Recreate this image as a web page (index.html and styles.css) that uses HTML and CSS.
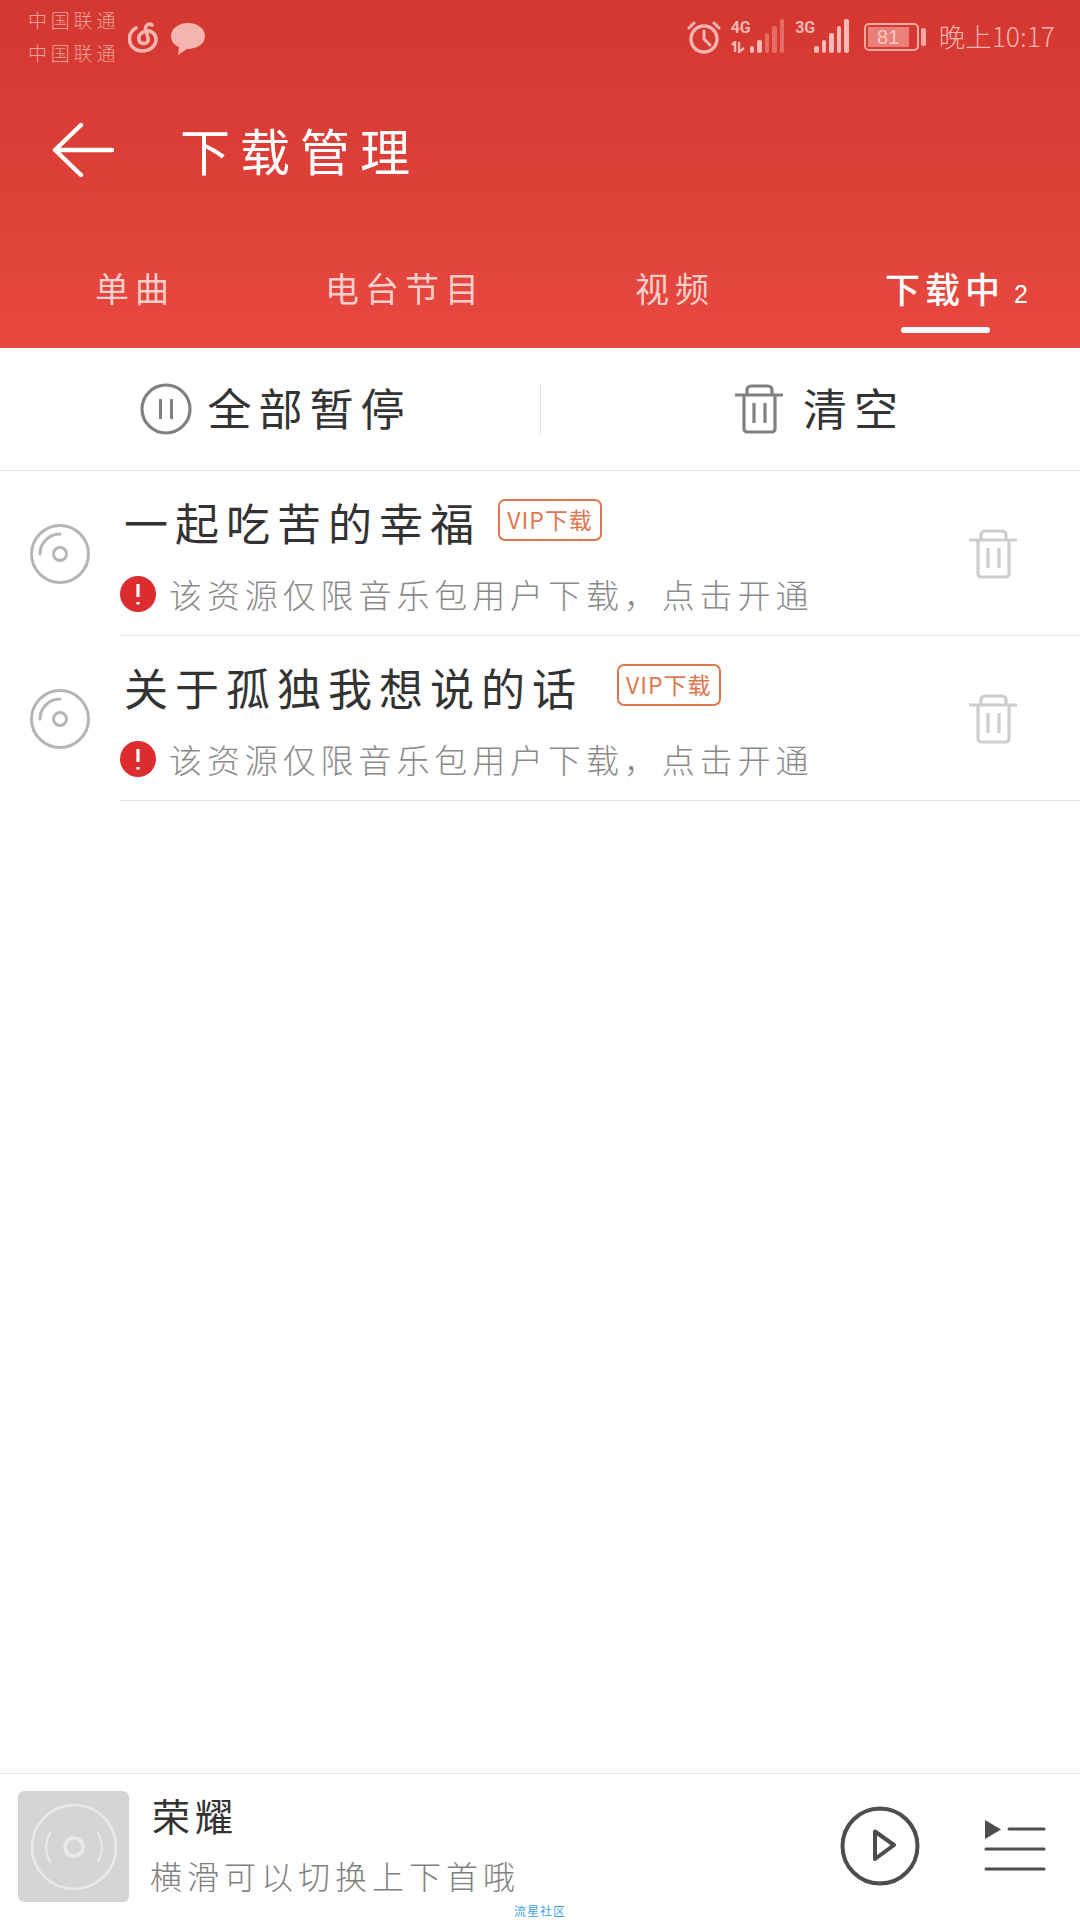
FILE: index.html
```html
<!DOCTYPE html>
<html lang="zh-CN">
<head>
<meta charset="UTF-8" />
<meta name="viewport" content="width=device-width, initial-scale=1.0" />
<title>下载管理</title>
<link rel="stylesheet" href="styles.css">
</head>
<body>

<svg class="defs" width="0" height="0">
  <symbol id="trash" viewBox="0 0 50 50">
    <path d="M1 11H49M10 11V45a3 3 0 0 0 3 3H38a3 3 0 0 0 3-3V11M13 11V6a4 4 0 0 1 4-4H34a4 4 0 0 1 4 4V11M20 19V39M31 19V39" fill="none" stroke="currentColor" stroke-width="3.200" />
  </symbol>
  <symbol id="disc" viewBox="0 0 60 60">
    <circle cx="30" cy="30" r="28.500" fill="none" stroke="#b5b5b5" stroke-width="3" />
    <circle cx="30" cy="30" r="6.500" fill="none" stroke="#b5b5b5" stroke-width="3" />
    <path d="M10 30A20 20 0 0 1 30 10" fill="none" stroke="#b5b5b5" stroke-width="3" stroke-linecap="round" />
  </symbol>
</svg>

<div class="page">
  <!-- Cabecera roja -->
  <header class="header">
    <div class="status">
      <div class="status-left">
        <div class="carriers">
          <span>中国联通</span>
          <span>中国联通</span>
        </div>
        <svg class="app-icon" width="30" height="32" viewBox="0 0 30 32">
          <path d="M8 6C3 9 1 13 1.500 18C2 25 8 29 14 29C22 29 28 24 28 17C28 12 23 8 18 9C13 10 10 14 11 18C12 22 18 23 20 19C21 16 18 11 17.500 7C17 3 21 1 24 3" fill="none" stroke="currentColor" stroke-width="3.600" stroke-linecap="round" />
        </svg>
        <svg class="app-icon" width="36" height="34" viewBox="0 0 36 34">
          <path d="M18 1C28 1 35 7 35 14C35 22 27 27 17 27L8 33L9 25C4 23 1 19 1 14C1 7 8 1 18 1Z" fill="currentColor" />
        </svg>
      </div>
      <div class="status-right">
        <svg class="alarm" width="34" height="34" viewBox="0 0 34 34">
          <circle cx="17" cy="19" r="13" fill="none" stroke="currentColor" stroke-width="3.400" />
          <path d="M17 11V19L23 25M2 8L7 3M32 8L27 3" fill="none" stroke="currentColor" stroke-width="3" stroke-linecap="round" />
        </svg>
        <div class="net">
          <div class="net-type">
            <span class="net-label">4G</span>
            <svg width="18" height="12" viewBox="0 0 18 12">
              <path d="M1 4L4 1V11M8 1V11L13 7" fill="none" stroke="currentColor" stroke-width="2.400" />
            </svg>
          </div>
          <div class="bars">
            <i class="bar b1"></i><i class="bar b2"></i><i class="bar b3 dim"></i><i class="bar b4 dim"></i><i class="bar b5 dim"></i>
          </div>
        </div>
        <div class="net">
          <div class="net-type">
            <span class="net-label">3G</span>
          </div>
          <div class="bars">
            <i class="bar b1"></i><i class="bar b2"></i><i class="bar b3"></i><i class="bar b4"></i><i class="bar b5"></i>
          </div>
        </div>
        <div class="battery">
          <div class="battery-body"><div class="battery-fill">81</div></div>
          <div class="battery-nub"></div>
        </div>
        <div class="clock">晚上10:17</div>
      </div>
    </div>

    <div class="toolbar">
      <svg class="back" width="62" height="56" viewBox="0 0 62 56">
        <path d="M29 3L3 28L29 53M3 28H60" fill="none" stroke="#fff" stroke-width="4.400" stroke-linecap="round" stroke-linejoin="round" />
      </svg>
      <h1 class="page-title">下载管理</h1>
    </div>

    <nav class="tabs">
      <div class="tab">单曲</div>
      <div class="tab">电台节目</div>
      <div class="tab">视频</div>
      <div class="tab tab-active">
        <span class="tab-label">下载中<span class="tab-count">2</span></span>
        <span class="tab-line"></span>
      </div>
    </nav>
  </header>

  <!-- Acciones -->
  <div class="actions">
    <div class="action action-pause">
      <svg width="52" height="52" viewBox="0 0 52 52">
        <circle cx="26" cy="26" r="24" fill="none" stroke="#808080" stroke-width="3.200" />
        <path d="M20.500 16V36M31.500 16V36" fill="none" stroke="#808080" stroke-width="3" />
      </svg>
      <span>全部暂停</span>
    </div>
    <div class="action action-clear">
      <svg class="icon-trash" width="50" height="50"><use href="#trash" /></svg>
      <span>清空</span>
    </div>
  </div>

  <!-- Lista de descargas -->
  <main class="list">
    <div class="song">
      <div class="song-disc"><svg width="60" height="60"><use href="#disc" /></svg></div>
      <div class="song-main">
        <div class="song-text">
          <div class="song-title">
            <span>一起吃苦的幸福</span>
            <span class="vip">VIP下载</span>
          </div>
          <div class="song-note">
            <svg class="warn" width="36" height="36" viewBox="0 0 36 36">
              <circle cx="18" cy="18" r="18" fill="#dd2c2f" />
              <path d="M18 8V21M18 26V28.500" fill="none" stroke="#fff" stroke-width="3.200" />
            </svg>
            <span>该资源仅限音乐包用户下载，点击开通</span>
          </div>
        </div>
        <svg class="song-trash" width="50" height="50"><use href="#trash" /></svg>
      </div>
    </div>

    <div class="song">
      <div class="song-disc"><svg width="60" height="60"><use href="#disc" /></svg></div>
      <div class="song-main">
        <div class="song-text">
          <div class="song-title">
            <span>关于孤独我想说的话&nbsp;</span>
            <span class="vip">VIP下载</span>
          </div>
          <div class="song-note">
            <svg class="warn" width="36" height="36" viewBox="0 0 36 36">
              <circle cx="18" cy="18" r="18" fill="#dd2c2f" />
              <path d="M18 8V21M18 26V28.500" fill="none" stroke="#fff" stroke-width="3.200" />
            </svg>
            <span>该资源仅限音乐包用户下载，点击开通</span>
          </div>
        </div>
        <svg class="song-trash" width="50" height="50"><use href="#trash" /></svg>
      </div>
    </div>
  </main>

  <!-- Reproductor -->
  <footer class="player">
    <svg class="cover" width="111" height="111" viewBox="0 0 111 111">
      <rect width="111" height="111" rx="6" fill="#d4d5d7" />
      <circle cx="56" cy="56" r="42" fill="none" stroke="#e8e9ea" stroke-width="2.600" />
      <circle cx="56" cy="56" r="9" fill="none" stroke="#e8e9ea" stroke-width="3.600" />
      <path d="M32 42C27 51 27 61 32 71M80 42C85 51 85 61 80 71" fill="none" stroke="#e8e9ea" stroke-width="2" stroke-linecap="round" />
    </svg>
    <div class="player-text">
      <div class="player-title">荣耀</div>
      <div class="player-sub">横滑可以切换上下首哦</div>
    </div>
    <svg class="play" width="80" height="80" viewBox="0 0 80 80">
      <circle cx="40" cy="40" r="37.500" fill="none" stroke="#4d4d4d" stroke-width="4" />
      <path d="M35 25.500L54 39L35 53Z" fill="none" stroke="#4d4d4d" stroke-width="4" stroke-linejoin="round" />
    </svg>
    <svg class="queue" width="62" height="52" viewBox="0 0 62 52">
      <path d="M1 1L17 10.500L1 20Z" fill="#4d4d4d" />
      <path d="M25 10H60M2 30H60M2 50H60" fill="none" stroke="#4d4d4d" stroke-width="3" stroke-linecap="round" />
    </svg>
    <div class="watermark">流星社区</div>
  </footer>
</div>

</body>
</html>
```

FILE: styles.css
```css
* {
  box-sizing: border-box;
}

body {
  margin: 0;
  background-color: #fff;
  font-family: "Noto Sans CJK SC", "Liberation Sans", sans-serif;
  color: #333;
}

.defs {
  display: block;
  height: 0;
}

.page {
  width: 1080px;
  height: 1920px;
  display: flex;
  flex-direction: column;
  overflow: hidden;
  position: relative;
}

/* Header */
.header {
  height: 348px;
  background: linear-gradient(#d23730, #e8483f);
  color: #fff;
}

.status {
  height: 72px;
  display: flex;
  justify-content: space-between;
  color: #f4b4af;
}

.status-left {
  display: flex;
  align-items: flex-start;
  padding: 3px 0 0 28px;
}

.carriers {
  display: flex;
  flex-direction: column;
  width: 88px;
  font-size: 19px;
  line-height: 33px;
  letter-spacing: 3.800px;
  font-weight: 300;
  color: #f0a09a;
  white-space: nowrap;
}

.app-icon {
  margin: 19px 0 0 12px;
}

.status-right {
  display: flex;
  align-items: flex-start;
  padding: 19px 25px 0 0;
}

.alarm {
  margin-right: 10px;
  margin-top: 1px;
}

.net {
  display: flex;
  margin-right: 11px;
}

.net-type {
  width: 19px;
  display: flex;
  flex-direction: column;
  height: 34px;
}

.net-label {
  font-family: "Roboto", "Liberation Sans", sans-serif;
  font-size: 16px;
  line-height: 17px;
  font-weight: 700;
}

.net-type svg {
  margin-top: 5px;
}

.bars {
  display: flex;
  align-items: flex-end;
  gap: 3px;
  height: 34px;
}

.bar {
  display: block;
  width: 4.500px;
  background-color: #f8b8b3;
  border-radius: 2px;
}

.bar.dim {
  background-color: #e66c64;
}

.b1 { height: 7px; }
.b2 { height: 13px; }
.b3 { height: 20px; }
.b4 { height: 27px; }
.b5 { height: 34px; }

.battery {
  display: flex;
  align-items: center;
  height: 28px;
  margin: 4px 13px 0 4px;
}

.battery-body {
  width: 55px;
  height: 28px;
  border: 2px solid #f4a8a2;
  border-radius: 5px;
  padding: 2px 8px 2px 2px;
}

.battery-fill {
  height: 100%;
  background-color: #e98079;
  color: #f9c9c5;
  font-family: "Liberation Sans", sans-serif;
  font-size: 20px;
  line-height: 20px;
  text-align: center;
}

.battery-nub {
  width: 5px;
  height: 18px;
  margin-left: 2px;
  background-color: #f4a8a2;
  border-radius: 2px;
}

.clock {
  font-size: 26.500px;
  line-height: 34px;
  font-weight: 300;
  color: #f4b4af;
  white-space: nowrap;
}

.toolbar {
  height: 156px;
  display: flex;
  align-items: center;
  padding-left: 52px;
}

.page-title {
  margin: -2px 0 0 66px;
  font-size: 50px;
  line-height: 60px;
  font-weight: 400;
  letter-spacing: 10px;
}

.tabs {
  display: grid;
  grid-template-columns: repeat(4, 270px);
  height: 120px;
}

.tab {
  display: flex;
  flex-direction: column;
  align-items: center;
  padding-top: 38px;
  font-size: 34px;
  line-height: 44px;
  letter-spacing: 6px;
  color: #f9cfcb;
}

.tab-active {
  color: #fff;
  font-size: 35px;
  letter-spacing: 5px;
  font-weight: 500;
}

.tab-label {
  position: relative;
}

.tab-count {
  position: absolute;
  left: 129px;
  top: 6px;
  font-family: "Liberation Sans", sans-serif;
  font-size: 25px;
  letter-spacing: 0;
}

.tab-line {
  width: 89px;
  height: 6px;
  margin-top: 17px;
  border-radius: 3px;
  background-color: #fff;
}

/* Actions */
.actions {
  height: 123px;
  display: flex;
  align-items: center;
  border-bottom: 1px solid #e3e3e3;
}

.action {
  width: 540px;
  height: 52px;
  display: flex;
  align-items: center;
  justify-content: center;
  gap: 16px;
  font-size: 44px;
  letter-spacing: 7px;
}

.action span {
  margin-top: -4px;
}

.action-pause {
  padding-left: 11px;
}

.action-clear {
  border-left: 1px solid #e3e3e3;
  padding-left: 18px;
  gap: 19px;
}

.icon-trash {
  color: #808080;
}

/* Song list */
.list {
  flex: 1;
}

.song {
  display: flex;
  height: 165px;
}

.song-disc {
  width: 120px;
  flex: none;
  display: flex;
  align-items: center;
  justify-content: center;
}

.song-main {
  flex: 1;
  display: flex;
  align-items: center;
  justify-content: space-between;
  border-bottom: 1px solid #e3e3e3;
  padding-right: 62px;
}

.song-text {
  align-self: flex-start;
  padding-top: 21px;
}

.song-title {
  display: flex;
  align-items: center;
  height: 60px;
  padding-left: 4px;
  font-size: 44px;
  letter-spacing: 7px;
  white-space: pre;
}

.vip {
  margin-left: 17px;
  margin-top: -4px;
  width: 104px;
  height: 42px;
  border: 2px solid #e0764f;
  border-radius: 7px;
  color: #e0764f;
  font-size: 23px;
  line-height: 37px;
  letter-spacing: 1px;
  text-align: center;
}

.song-note {
  display: flex;
  align-items: center;
  height: 40px;
  margin-top: 22px;
  font-size: 33px;
  letter-spacing: 4.900px;
  font-weight: 300;
  color: #8a8a8a;
  white-space: nowrap;
}

.warn {
  margin-right: 13px;
}

.song-trash {
  color: #cdcdcd;
  margin-top: 2px;
}

/* Player */
.player {
  height: 147px;
  display: flex;
  align-items: center;
  padding: 0 34px 0 18px;
  border-top: 1px solid #e3e3e3;
  position: relative;
}

.cover {
  margin-bottom: 2px;
}

.player-text {
  flex: 1;
  margin-left: 21px;
}

.player-title {
  height: 52px;
  margin-top: -8px;
  padding-left: 2px;
  font-size: 38px;
  line-height: 52px;
  letter-spacing: 5px;
}

.player-sub {
  height: 44px;
  margin-top: 12px;
  font-size: 32px;
  line-height: 44px;
  letter-spacing: 5px;
  font-weight: 300;
  color: #808080;
}

.play {
  margin-right: 64px;
  margin-bottom: 2px;
}

.queue {
  margin-bottom: 4px;
}

.watermark {
  position: absolute;
  left: 514px;
  bottom: 0;
  font-size: 12px;
  line-height: 18px;
  letter-spacing: 1px;
  color: #3f9fe0;
}
```
